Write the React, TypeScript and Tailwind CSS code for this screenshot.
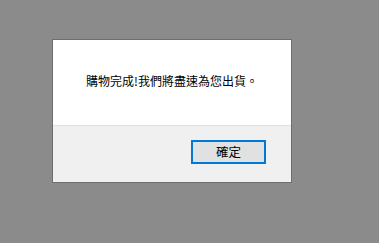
import React from "react";

export default function App() {
  return (
    <div
      className="w-[379px] h-[243px] bg-[#8b8b8b] pt-[39px] pl-[52px] overflow-hidden"
      style={{ fontFamily: '"Noto Sans CJK TC", "Noto Sans CJK SC", sans-serif' }}
    >
      <div className="w-[240px] h-[144px] border border-[#6e6e6e] flex flex-col">
        <div className="h-[85px] bg-white pl-[33px] pt-[34px]">
          <p className="text-[12px] leading-[14px] text-black whitespace-nowrap">
            購物完成!我們將盡速為您出貨。
          </p>
        </div>
        <div className="flex-1 bg-[#f0f0f0] border-t border-[#dfdfdf] flex justify-end items-start pt-[14px] pr-[25px]">
          <button className="w-[75px] h-[24px] border-2 border-[#0078d7] bg-[#e1e1e1] text-[12.5px] leading-none text-black flex items-center justify-center">
            確定
          </button>
        </div>
      </div>
    </div>
  );
}
